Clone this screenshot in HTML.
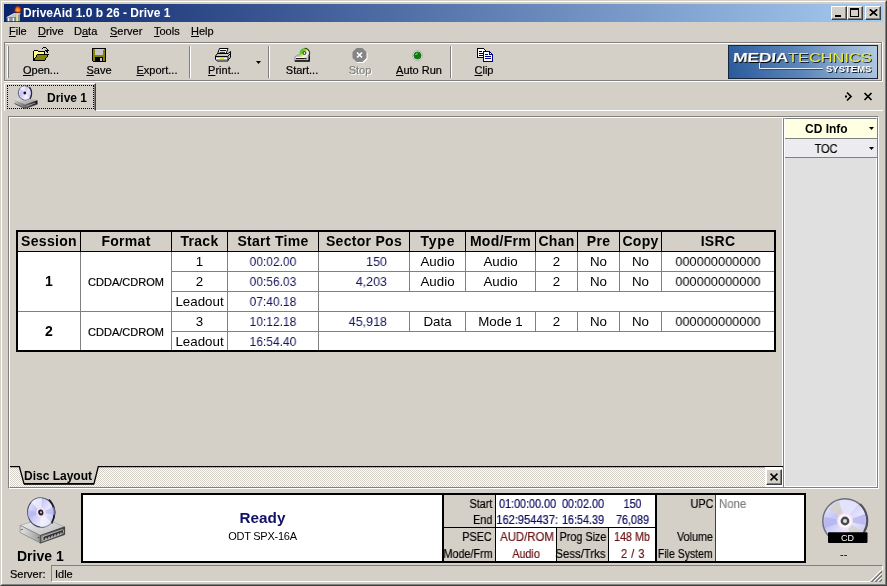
<!DOCTYPE html>
<html>
<head>
<meta charset="utf-8">
<title>DriveAid</title>
<style>
*{box-sizing:border-box;margin:0;padding:0}
html,body{width:887px;height:586px;overflow:hidden;background:#d4d0c8}
body{font-family:"Liberation Sans",sans-serif;font-size:11px;color:#000;position:relative}
.a{position:absolute}
.t{position:absolute;white-space:nowrap;line-height:1;will-change:transform}
.menu,.nr,.nl,.nc,.fm,.sbt{-webkit-text-stroke:.2px}
u{text-decoration:underline;text-underline-offset:1px}
#frame{left:0;top:0;width:887px;height:586px;border:1px solid;border-color:#d4d0c8 #404040 #404040 #d4d0c8}
#frame2{left:1px;top:1px;width:885px;height:584px;border:1px solid;border-color:#fff #808080 #808080 #fff}
#title{left:4px;top:4px;width:879px;height:18px;background:linear-gradient(90deg,#0a246a 0%,#a6caf0 100%)}
#title .t{left:18.5px;top:3px;color:#fff;font-weight:bold;font-size:12px}
.cap{position:absolute;top:6px;width:16px;height:14px;background:#d4d0c8;border:1px solid;border-color:#fff #404040 #404040 #fff;box-shadow:inset -1px -1px 0 #808080}
.menu{top:26px;font-size:11px}
.hl{position:absolute;height:1px}
.vl{position:absolute;width:1px}
.tb{position:absolute;font-size:11px;white-space:nowrap;line-height:1;text-align:center;transform:translateX(-50%);will-change:transform;-webkit-text-stroke:.2px}

.th{font-weight:bold;font-size:14px;text-align:center;letter-spacing:.3px}
.sb{font-weight:bold;font-size:14px;text-align:center}
.fm{font-size:11px;text-align:center}
.c13{font-size:13.33px;text-align:center}
.c12{font-size:13.33px;text-align:center;transform:scaleX(.96)}
.tm{font-size:13.33px;text-align:center;color:#14145c;transform:scaleX(.9)}
.sp{font-size:13.33px;text-align:right;color:#14145c;transform:scaleX(.94);transform-origin:right center}

.nr{font-size:12px;text-align:right;transform:scaleX(.9);transform-origin:right center}
.nl{font-size:12px;text-align:left;transform:scaleX(.9);transform-origin:left center}
.nc{font-size:12px;text-align:center;transform:scaleX(.9);transform-origin:center center}
.nv{color:#0c0c60}
.rd{color:#681010}
</style>
</head>
<body>

<svg width="0" height="0" style="position:absolute">
  <defs>
    <linearGradient id="gcd" x1="0" y1="0" x2="1" y2="1">
      <stop offset="0" stop-color="#f4f4ff"/><stop offset=".35" stop-color="#c4c4f6"/><stop offset=".6" stop-color="#e6e6fb"/><stop offset="1" stop-color="#b8b8f0"/>
    </linearGradient>
    <linearGradient id="gtop" x1="0" y1="0" x2="1" y2="1"><stop offset="0" stop-color="#f2f2f2"/><stop offset="1" stop-color="#b8b8b8"/></linearGradient>
    <linearGradient id="gfl" x1="0" y1="0" x2="1" y2="0"><stop offset="0" stop-color="#e4e4e4"/><stop offset="1" stop-color="#9a9a9a"/></linearGradient>
    <linearGradient id="gfr" x1="0" y1="0" x2="1" y2="0"><stop offset="0" stop-color="#8a8a8a"/><stop offset="1" stop-color="#3c3c3c"/></linearGradient>
    <linearGradient id="glogo" x1="0" y1="1" x2="1" y2="0"><stop offset="0" stop-color="#2a5a9c"/><stop offset=".45" stop-color="#5f88bb"/><stop offset="1" stop-color="#b4cbe2"/></linearGradient>
    <linearGradient id="gtop2" x1="0" y1="0" x2="1" y2="1"><stop offset="0" stop-color="#eeeeee"/><stop offset="1" stop-color="#8c8c8c"/></linearGradient>
    <linearGradient id="gfl2" x1="0" y1="0" x2="1" y2="0"><stop offset="0" stop-color="#c4c4c4"/><stop offset="1" stop-color="#6c6c6c"/></linearGradient>
    <linearGradient id="gfr2" x1="0" y1="0" x2="1" y2="0"><stop offset="0" stop-color="#707070"/><stop offset="1" stop-color="#0c0c0c"/></linearGradient>
    <linearGradient id="ggr" x1="0" y1="0" x2="1" y2="1"><stop offset="0" stop-color="#10b020"/><stop offset=".3" stop-color="#58d030"/><stop offset=".48" stop-color="#e4e84c"/><stop offset=".62" stop-color="#f4f4f4"/><stop offset="1" stop-color="#b4b8b4"/></linearGradient>
  </defs>
</svg>
<div class="a" id="frame"></div>
<div class="a" id="frame2"></div>

<!-- title bar -->
<div class="a" id="title"><div class="t">DriveAid 1.0 b 26 - Drive 1</div></div>
<svg class="a" style="left:4px;top:4px" width="18" height="18" viewBox="0 0 18 18">
  <path d="M2 13.6 L10.4 9 H13 L11.8 13.6 Z" fill="#c8c0c4"/>
  <path d="M2 13.6 L10.4 9 L11.2 9.6 L4 13.6 Z" fill="#e4dcdc"/>
  <rect x="2.8" y="13.6" width="9" height="3.6" fill="#7f969e"/>
  <rect x="4" y="13.8" width="1.2" height="3.4" fill="#f4f4fa"/>
  <rect x="8.8" y="13.8" width="1.2" height="3.4" fill="#f4f4fa"/>
  <rect x="11.8" y="9" width="4.2" height="8.2" fill="#9aa47c"/>
  <rect x="12.2" y="9.4" width="1.8" height="7.8" fill="#e4dcb0"/>
  <path d="M11 9.2 H16.8 L16 10.4 H11.8Z" fill="#d8c8c0"/>
  <path d="M10.4 7.6 Q9.6 4.4 13.2 1.2 Q13.6 2.8 15.6 2 Q18.6 5.6 16.4 8.6 Q13.4 9.6 10.4 7.6Z" fill="#a02810"/>
  <path d="M11.2 7.2 Q10.8 4.8 13.2 2.8 Q13.8 4 15.2 3.4 Q17.2 5.8 15.8 7.8 Q13.4 8.4 11.2 7.2Z" fill="#f07818"/>
  <path d="M12.4 7 Q12.4 5.4 13.6 4.6 Q14.8 5.6 14.6 7.2Z" fill="#ffb040"/>
</svg>
<div class="cap" style="left:831px"><div class="a" style="left:3px;top:8px;width:6px;height:2px;background:#000"></div></div>
<div class="cap" style="left:847px"><div class="a" style="left:2px;top:1px;width:9px;height:9px;border:1px solid #000;border-top-width:2px"></div></div>
<div class="cap" style="left:865px"><svg class="a" style="left:2.5px;top:2px" width="9" height="7" viewBox="0 0 9 7"><path d="M0.8 0.3 L8.2 6.7 M8.2 0.3 L0.8 6.7" stroke="#000" stroke-width="1.7" fill="none"/></svg></div>

<!-- menu -->
<div class="t menu" style="left:9px"><u>F</u>ile</div>
<div class="t menu" style="left:38px"><u>D</u>rive</div>
<div class="t menu" style="left:74px">D<u>a</u>ta</div>
<div class="t menu" style="left:110px"><u>S</u>erver</div>
<div class="t menu" style="left:154px"><u>T</u>ools</div>
<div class="t menu" style="left:191px"><u>H</u>elp</div>

<!-- toolbar -->
<div class="hl" style="left:4px;top:42px;width:879px;background:#808080"></div>
<div class="hl" style="left:5px;top:43px;width:876px;background:#fff"></div>
<div class="hl" style="left:4px;top:80px;width:878px;background:#808080"></div>
<div class="hl" style="left:4px;top:81px;width:879px;background:#fff"></div>
<div class="vl" style="left:4px;top:42px;height:39px;background:#808080"></div>
<div class="vl" style="left:881px;top:43px;height:38px;background:#808080"></div>
<div class="vl" style="left:882px;top:42px;height:40px;background:#fff"></div>
<div class="vl" style="left:7px;top:46px;height:32px;background:#fff"></div>
<div class="vl" style="left:8px;top:46px;height:32px;background:#808080"></div>

<div class="tb" style="left:41px;top:65px"><u>O</u>pen...</div>
<div class="tb" style="left:99px;top:65px"><u>S</u>ave</div>
<div class="tb" style="left:156.5px;top:65px"><u>E</u>xport...</div>
<div class="tb" style="left:223.5px;top:65px"><u>P</u>rint...</div>
<div class="tb" style="left:301.5px;top:65px">Start...</div>
<div class="tb" style="left:360px;top:65px;color:#808080;text-shadow:1px 1px 0 #fff">Stop</div>
<div class="tb" style="left:418.5px;top:65px"><u>A</u>uto Run</div>
<div class="tb" style="left:484px;top:65px"><u>C</u>lip</div>

<!-- toolbar separators -->
<div class="vl" style="left:189px;top:46px;height:32px;background:#808080"></div>
<div class="vl" style="left:190px;top:46px;height:32px;background:#fff"></div>
<div class="vl" style="left:268px;top:46px;height:32px;background:#808080"></div>
<div class="vl" style="left:269px;top:46px;height:32px;background:#fff"></div>
<div class="vl" style="left:450px;top:46px;height:32px;background:#808080"></div>
<div class="vl" style="left:451px;top:46px;height:32px;background:#fff"></div>
<svg class="a" style="left:256px;top:61px" width="5" height="3" viewBox="0 0 5 3"><path d="M0 0h5L2.5 3z" fill="#000"/></svg>

<!-- logo -->
<div class="a" id="logo" style="left:728px;top:45px;width:150px;height:34px;border:1px solid #18243a;background:linear-gradient(75deg,#2a5a9c 0%,#5f88bb 50%,#b4cbe2 100%)"></div>

<!-- tab row -->
<div class="hl" style="left:96px;top:110px;width:787px;background:#fff"></div>
<div class="a" id="tab1" style="left:4px;top:83px;width:92px;height:28px;border-top-left-radius:2px;border:1px solid;border-color:#fff #404040 #d4d0c8 #fff;box-shadow:inset -1px 0 0 #808080"></div>
<div class="a" style="left:7px;top:85px;width:87px;height:24px;border:1px dotted #000"></div>
<div class="t" style="left:47px;top:92px;font-weight:bold;font-size:12px">Drive 1</div>

<!-- main panel -->
<div class="a" id="panel" style="left:8px;top:116px;width:871px;height:373px;border:1px solid;border-color:#808080 #fff #fff #808080"></div>
<div class="a" style="left:9px;top:117px;width:869px;height:371px;border:1px solid;border-color:#fff #808080 #808080 #fff"></div>

<!-- sidebar -->
<div class="vl" style="left:782px;top:118px;height:369px;background:#fff"></div>
<div class="vl" style="left:783px;top:118px;height:369px;background:#808080"></div>
<div class="a" id="side" style="left:784px;top:118px;width:93px;height:369px;background:#e0e0e0;border:1px solid;border-color:#808080 #fff #fff #fff"></div>
<div class="a" style="left:785px;top:119px;width:92px;height:19px;background:#ffffe1"></div>
<div class="hl" style="left:785px;top:138px;width:92px;background:#808080"></div>
<div class="a" style="left:785px;top:139px;width:92px;height:18px;background:#ececf0"></div>
<div class="hl" style="left:785px;top:157px;width:92px;background:#808080"></div>
<div class="t" style="left:805px;top:123px;font-weight:bold;font-size:12px">CD Info</div>
<div class="t nc" style="left:806px;top:143px;width:40px">TOC</div>
<svg class="a" style="left:869px;top:127px" width="5" height="3" viewBox="0 0 5 3"><path d="M0 0h5L2.5 3z" fill="#000"/></svg>
<svg class="a" style="left:869px;top:147px" width="5" height="3" viewBox="0 0 5 3"><path d="M0 0h5L2.5 3z" fill="#000"/></svg>

<!-- TOC table -->
<div class="a" id="toc" style="left:16px;top:230px;width:760px;height:122px;border:2px solid #000;background:#fff"></div>
<div class="a" style="left:18px;top:232px;width:756px;height:19px;background:#d4d0c8"></div>
<div class="hl" style="left:18px;top:251px;width:756px;background:#000"></div>
<div class="t th" style="left:18px;top:234px;width:62px">Session</div>
<div class="t th" style="left:81px;top:234px;width:90px">Format</div>
<div class="vl" style="left:80px;top:232px;height:19px;background:#000"></div>
<div class="t th" style="left:172px;top:234px;width:55px">Track</div>
<div class="vl" style="left:171px;top:232px;height:19px;background:#000"></div>
<div class="t th" style="left:228px;top:234px;width:90px">Start Time</div>
<div class="vl" style="left:227px;top:232px;height:19px;background:#000"></div>
<div class="t th" style="left:319px;top:234px;width:90px">Sector Pos</div>
<div class="vl" style="left:318px;top:232px;height:19px;background:#000"></div>
<div class="t th" style="left:410px;top:234px;width:55px;letter-spacing:.8px;text-indent:.8px">Type</div>
<div class="vl" style="left:409px;top:232px;height:19px;background:#000"></div>
<div class="t th" style="left:466px;top:234px;width:69px">Mod/Frm</div>
<div class="vl" style="left:465px;top:232px;height:19px;background:#000"></div>
<div class="t th" style="left:536px;top:234px;width:41px">Chan</div>
<div class="vl" style="left:535px;top:232px;height:19px;background:#000"></div>
<div class="t th" style="left:578px;top:234px;width:41px">Pre</div>
<div class="vl" style="left:577px;top:232px;height:19px;background:#000"></div>
<div class="t th" style="left:620px;top:234px;width:41px">Copy</div>
<div class="vl" style="left:619px;top:232px;height:19px;background:#000"></div>
<div class="t th" style="left:662px;top:234px;width:112px">ISRC</div>
<div class="vl" style="left:661px;top:232px;height:19px;background:#000"></div>
<div class="vl" style="left:80px;top:252px;height:98px;background:#808080"></div>
<div class="vl" style="left:171px;top:252px;height:98px;background:#808080"></div>
<div class="vl" style="left:227px;top:252px;height:98px;background:#808080"></div>
<div class="vl" style="left:318px;top:252px;height:98px;background:#808080"></div>
<div class="vl" style="left:409px;top:252px;height:39px;background:#808080"></div>
<div class="vl" style="left:409px;top:312px;height:19px;background:#808080"></div>
<div class="vl" style="left:465px;top:252px;height:39px;background:#808080"></div>
<div class="vl" style="left:465px;top:312px;height:19px;background:#808080"></div>
<div class="vl" style="left:535px;top:252px;height:39px;background:#808080"></div>
<div class="vl" style="left:535px;top:312px;height:19px;background:#808080"></div>
<div class="vl" style="left:577px;top:252px;height:39px;background:#808080"></div>
<div class="vl" style="left:577px;top:312px;height:19px;background:#808080"></div>
<div class="vl" style="left:619px;top:252px;height:39px;background:#808080"></div>
<div class="vl" style="left:619px;top:312px;height:19px;background:#808080"></div>
<div class="vl" style="left:661px;top:252px;height:39px;background:#808080"></div>
<div class="vl" style="left:661px;top:312px;height:19px;background:#808080"></div>
<div class="hl" style="left:172px;top:271px;width:602px;background:#808080"></div>
<div class="hl" style="left:172px;top:291px;width:602px;background:#808080"></div>
<div class="hl" style="left:18px;top:311px;width:756px;background:#808080"></div>
<div class="hl" style="left:172px;top:331px;width:602px;background:#808080"></div>
<div class="t sb" style="left:18px;top:274px;width:62px">1</div>
<div class="t sb" style="left:18px;top:324px;width:62px">2</div>
<div class="t fm" style="left:81px;top:277px;width:90px">CDDA/CDROM</div>
<div class="t fm" style="left:81px;top:327px;width:90px">CDDA/CDROM</div>
<div class="t c13" style="left:172px;top:254.6px;width:55px">1</div>
<div class="t tm" style="left:228px;top:254.6px;width:90px">00:02.00</div>
<div class="t sp" style="left:319px;top:254.6px;width:68px">150</div>
<div class="t c13" style="left:410px;top:254.6px;width:55px">Audio</div>
<div class="t c13" style="left:466px;top:254.6px;width:69px">Audio</div>
<div class="t c13" style="left:536px;top:254.6px;width:41px">2</div>
<div class="t c13" style="left:578px;top:254.6px;width:41px">No</div>
<div class="t c13" style="left:620px;top:254.6px;width:41px">No</div>
<div class="t c12" style="left:662px;top:254.6px;width:112px">000000000000</div>
<div class="t c13" style="left:172px;top:274.6px;width:55px">2</div>
<div class="t tm" style="left:228px;top:274.6px;width:90px">00:56.03</div>
<div class="t sp" style="left:319px;top:274.6px;width:68px">4,203</div>
<div class="t c13" style="left:410px;top:274.6px;width:55px">Audio</div>
<div class="t c13" style="left:466px;top:274.6px;width:69px">Audio</div>
<div class="t c13" style="left:536px;top:274.6px;width:41px">2</div>
<div class="t c13" style="left:578px;top:274.6px;width:41px">No</div>
<div class="t c13" style="left:620px;top:274.6px;width:41px">No</div>
<div class="t c12" style="left:662px;top:274.6px;width:112px">000000000000</div>
<div class="t c13" style="left:172px;top:294.6px;width:55px">Leadout</div>
<div class="t tm" style="left:228px;top:294.6px;width:90px">07:40.18</div>
<div class="t c13" style="left:172px;top:314.6px;width:55px">3</div>
<div class="t tm" style="left:228px;top:314.6px;width:90px">10:12.18</div>
<div class="t sp" style="left:319px;top:314.6px;width:68px">45,918</div>
<div class="t c13" style="left:410px;top:314.6px;width:55px">Data</div>
<div class="t c13" style="left:466px;top:314.6px;width:69px">Mode 1</div>
<div class="t c13" style="left:536px;top:314.6px;width:41px">2</div>
<div class="t c13" style="left:578px;top:314.6px;width:41px">No</div>
<div class="t c13" style="left:620px;top:314.6px;width:41px">No</div>
<div class="t c12" style="left:662px;top:314.6px;width:112px">000000000000</div>
<div class="t c13" style="left:172px;top:334.6px;width:55px">Leadout</div>
<div class="t tm" style="left:228px;top:334.6px;width:90px">16:54.40</div>


<!-- bottom tab strip -->
<div class="a" style="left:10px;top:466px;width:772px;height:21px;background:repeating-conic-gradient(#fff 0 25%,#d4d0c8 0 50%) 0 0/2px 2px"></div>
<svg class="a" style="left:10px;top:466px" width="773" height="20" viewBox="0 0 773 20">
  <path d="M9 0 L14 18 L84 18 L88 0 Z" fill="#d4d0c8"/>
  <path d="M0 0.5 H9.3 L14 17.6 H84 L88.3 0.5 H773" fill="none" stroke="#000" stroke-width="1.3"/><path d="M14 18 H84" stroke="#000" stroke-width="1.6" fill="none"/>
</svg>
<div class="t" style="left:24px;top:470px;font-weight:bold;font-size:12px">Disc Layout</div>
<div class="a" style="left:765px;top:467px;width:17px;height:20px;background:#fff"></div>
<div class="a" style="left:766px;top:469px;width:16px;height:16px;background:#d4d0c8;border:1px solid;border-color:#fff #404040 #404040 #fff;box-shadow:inset -1px -1px 0 #808080"></div>
<svg class="a" style="left:770px;top:473px" width="8" height="8" viewBox="0 0 8 8"><path d="M0.5 0.7 L7.5 7.3 M7.5 0.7 L0.5 7.3" stroke="#000" stroke-width="1.6" fill="none"/></svg>

<!-- bottom status panel -->
<div class="a" style="left:81px;top:493px;width:725px;height:70px;border:2px solid #000;background:#fff"></div>
<div class="a" style="left:442px;top:495px;width:2px;height:66px;background:#000"></div>
<div class="a" style="left:444px;top:495px;width:51px;height:66px;background:#d4d0c8"></div>
<div class="vl" style="left:495px;top:495px;height:66px;background:#000"></div>
<div class="hl" style="left:444px;top:527px;width:211px;background:#000"></div>
<div class="a" style="left:557px;top:528px;width:51px;height:33px;background:#d4d0c8"></div>
<div class="vl" style="left:556px;top:528px;height:33px;background:#000"></div>
<div class="vl" style="left:608px;top:528px;height:33px;background:#000"></div>
<div class="a" style="left:655px;top:495px;width:2px;height:66px;background:#000"></div>
<div class="a" style="left:657px;top:495px;width:58px;height:66px;background:#d4d0c8"></div>
<div class="vl" style="left:715px;top:495px;height:66px;background:#404040"></div>

<div class="t" style="left:83px;top:510.5px;width:359px;text-align:center;font-weight:bold;font-size:14px;color:#101068;transform:scaleX(1.09)">Ready</div>
<div class="t" style="left:83px;top:530.7px;width:359px;text-align:center;font-size:11px;letter-spacing:-.25px">ODT SPX-16A</div>

<div class="t nr" style="right:395px;top:498px">Start</div>
<div class="t nr" style="right:395px;top:514px">End</div>
<div class="t nr" style="right:395px;top:531px">PSEC</div>
<div class="t nr" style="right:394.3px;top:548px;transform:scaleX(.9)">Mode/Frm</div>
<div class="t nc nv" style="left:496px;top:498px;width:61px">01:00:00.00</div>
<div class="t nc nv" style="left:493.7px;top:514px;width:61px;transform:scaleX(.925)">162:954437:</div>
<div class="t nc nv" style="left:557px;top:498px;width:52px">00:02.00</div>
<div class="t nc nv" style="left:557px;top:514px;width:52px">16:54.39</div>
<div class="t nc nv" style="left:609px;top:498px;width:47px">150</div>
<div class="t nc nv" style="left:609px;top:514px;width:47px">76,089</div>
<div class="t nc rd" style="left:496.5px;top:531px;width:60px;transform:scaleX(.95)">AUD/ROM</div>
<div class="t nc rd" style="left:496px;top:548px;width:60px">Audio</div>
<div class="t nc" style="left:557px;top:531px;width:51px">Prog Size</div>
<div class="t nc" style="left:554.3px;top:548px;width:51px;transform:scaleX(.945)">Sess/Trks</div>
<div class="t nc rd" style="left:609px;top:531px;width:46px">148 Mb</div>
<div class="t nc rd" style="left:610px;top:548px;width:46px;letter-spacing:.6px">2 / 3</div>
<div class="t nr" style="right:174px;top:498px">UPC</div>
<div class="t nr" style="right:174px;top:531px">Volume</div>
<div class="t nr" style="right:174.3px;top:548px;transform:scaleX(.875)">File System</div>
<div class="t nl" style="left:719px;top:498px;color:#808080;transform:scaleX(.95)">None</div>

<div class="t" style="left:17px;top:549px;font-weight:bold;font-size:14px">Drive 1</div>
<div class="t" style="left:840px;top:549px;font-size:11px">--</div>

<!-- status bar -->
<div class="t sbt" style="left:10px;top:569px;font-size:11px">Server:</div>
<div class="a" style="left:51px;top:565px;width:832px;height:17px;border:1px solid;border-color:#808080 #fff #fff #808080"></div>
<div class="t sbt" style="left:55px;top:569px;font-size:11px">Idle</div>
<div class="vl" style="left:882px;top:570px;height:12px;background:#d4d0c8"></div><div class="hl" style="left:870px;top:581px;width:13px;background:#d4d0c8"></div>
<svg class="a" style="left:870px;top:570px" width="12" height="12" viewBox="0 0 12 12">
  <path d="M11 0 L0 11 M11 4 L4 11 M11 8 L8 11" stroke="#fff" stroke-width="1" fill="none"/>
  <path d="M12 1 L1 12 M12 2 L2 12 M12 5 L5 12 M12 6 L6 12 M12 9 L9 12 M12 10 L10 12" stroke="#808080" stroke-width="1" fill="none"/>
</svg>

<!-- toolbar icons -->
<svg class="a" style="left:33px;top:47px" width="17" height="15" viewBox="0 0 17 15" shape-rendering="crispEdges">
  <path d="M0.5 13.5 V4.5 L1.5 3.5 H4.5 L5.5 4.5 H11.5 V7.5" fill="#ffff84" stroke="#000"/>
  <path d="M0.5 13.5 L4.5 7.5 H15.5 L11.5 13.5 Z" fill="#848400" stroke="#000"/>
  <path d="M9 1.5 H10 M10 0.5 H13 M13 1.5 H14 M14 2.5 H15 M12 3.5 H16 M13 4.5 H15 M14 5.5 H15" stroke="#000" fill="none"/>
</svg>
<svg class="a" style="left:92px;top:48px" width="14" height="14" viewBox="0 0 14 14" shape-rendering="crispEdges">
  <path d="M0.5 0.5 H13.5 V13.5 H1.5 L0.5 12.5 Z" fill="#848400" stroke="#000"/>
  <rect x="3" y="1" width="8" height="6" fill="#c6c6c6"/>
  <rect x="11" y="1" width="1" height="1" fill="#c6c6c6"/>
  <rect x="3" y="9" width="8" height="4" fill="#000"/>
  <rect x="8" y="10" width="2" height="3" fill="#c6c6c6"/>
</svg>
<svg class="a" style="left:214px;top:47px" width="18" height="16" viewBox="0 0 18 16">
  <path d="M5.5 1.5 H14 L12 7 H3.5 Z" fill="#fff" stroke="#000" stroke-width="1"/>
  <path d="M6 3.5 H12 M5.5 5.3 H11.2" stroke="#000" stroke-width=".9"/>
  <path d="M1.5 9 L3.5 6.5 H14 L16.5 4.5 V10.5 L14 13 V14 H3 L1.5 12.5 Z" fill="#c6c6c6" stroke="#000" stroke-width="1"/>
  <path d="M2 9.5 H13.5 L16 7" stroke="#000" stroke-width="1" fill="none"/>
  <path d="M2 11.5 H13.5" stroke="#fff" stroke-width="1"/>
  <path d="M6 11.5 H10" stroke="#e8e840" stroke-width="1"/>
  <path d="M2 13 H13.5" stroke="#848484" stroke-width="1"/>
  <path d="M14 9.5 V13" stroke="#000" stroke-width="1"/>
</svg>
<svg class="a" style="left:294px;top:47px" width="17" height="16" viewBox="0 0 17 16">
  <path d="M0.8 10 L4 7.8 H15 V13.6 H0.8 Z" fill="#c8c8c8" stroke="#8c8c8c" stroke-width=".8"/>
  <path d="M0.8 14 H15.2 V8.5" stroke="#000" stroke-width="1.3" fill="none"/>
  <path d="M2 10.6 H12.5" stroke="#fff" stroke-width="1"/>
  <path d="M2 11.6 H12.5" stroke="#000" stroke-width="1"/>
  <circle cx="10.6" cy="6.2" r="5" fill="url(#ggr)"/>
  <path d="M10.6 1.2 A5 5 0 0 1 14.6 9.2" stroke="#303830" stroke-width="1.1" fill="none"/>
  <circle cx="10.4" cy="6" r="1.5" fill="#e8e8e8" stroke="#181818" stroke-width=".9"/>
</svg>
<svg class="a" style="left:351px;top:47px" width="18" height="18" viewBox="0 0 18 18">
  <path d="M6.6 2 H12.4 L16.5 6.1 V11.9 L12.4 16 H6.6 L2.5 11.9 V6.1 Z" fill="#fff"/>
  <path d="M5.6 1 H11.4 L15.5 5.1 V10.9 L11.4 15 H5.6 L1.5 10.9 V5.1 Z" fill="#848484"/>
  <path d="M6 5.5 L11 10.5 M11 5.5 L6 10.5" stroke="#fff" stroke-width="1.6" fill="none"/>
</svg>
<svg class="a" style="left:411px;top:49px" width="13" height="13" viewBox="0 0 13 13">
  <circle cx="6.5" cy="6.5" r="5" fill="#e8ece8" stroke="#b0b4ac" stroke-width="1"/>
  <circle cx="6.5" cy="6.5" r="3.6" fill="#008400" stroke="#2a6a2a" stroke-width=".8"/>
  <path d="M4.6 6 Q5 4.6 6.6 4.6" stroke="#c0f0c0" stroke-width=".9" fill="none"/>
</svg>
<svg class="a" style="left:477px;top:48px" width="17" height="14" viewBox="0 0 17 14" shape-rendering="crispEdges">
  <path d="M0.5 0.5 H6.5 L8.5 2.5 V9.5 H0.5 Z" fill="#fff" stroke="#000"/>
  <path d="M2 3.5 H5 M2 5.5 H7 M2 7.5 H7" stroke="#000"/>
  <path d="M6.5 3.5 H12.5 L15.5 6.5 V13.5 H6.5 Z" fill="#fff" stroke="#000084"/>
  <path d="M12.5 3.5 V6.5 H15.5" fill="none" stroke="#000084"/>
  <path d="M8 6.5 H11 M8 8.5 H14 M8 10.5 H14" stroke="#000084"/>
</svg>

<!-- logo text -->
<div class="t" style="left:734px;top:52.5px;font-weight:bold;font-size:12.5px;color:#000;transform:scaleX(1.42) skewX(-4deg);transform-origin:left center;letter-spacing:-.3px">MEDIA</div>
<div class="t" style="left:733px;top:51.5px;font-weight:bold;font-size:12.5px;color:#fff;transform:scaleX(1.42) skewX(-4deg);transform-origin:left center;letter-spacing:-.3px">MEDIA</div>
<div class="t" style="left:789px;top:52.5px;font-size:12.5px;color:#1a2430;transform:scaleX(1.31);transform-origin:left center">TECHNICS</div>
<div class="t" style="left:788px;top:51.5px;font-size:12.5px;color:#ecec38;transform:scaleX(1.31);transform-origin:left center">TECHNICS</div>
<div class="t" style="left:827px;top:65px;font-weight:bold;font-size:9.5px;color:#1a2430">SYSTEMS</div>
<div class="t" style="left:826px;top:64px;font-weight:bold;font-size:9.5px;color:#fff">SYSTEMS</div>
<svg class="a" style="left:758px;top:62px" width="68" height="9" viewBox="0 0 68 9"><path d="M1.5 1 V6.5 H65" fill="none" stroke="#e4ecf4" stroke-width="1"/><path d="M2.5 2 V5.5 M2 7.5 H65" fill="none" stroke="#33507a" stroke-width="1"/></svg>

<!-- tab-row right glyphs -->
<svg class="a" style="left:844px;top:91px" width="10" height="11" viewBox="0 0 10 11"><path d="M3 1.5 L7 5.5 L3 9.5" stroke="#000" stroke-width="1.7" fill="none"/><rect x="1" y="4.5" width="2" height="2" fill="#000"/></svg>
<svg class="a" style="left:863px;top:92px" width="10" height="9" viewBox="0 0 10 9"><path d="M1.5 1 L8.5 8 M8.5 1 L1.5 8" stroke="#000" stroke-width="1.7" fill="none"/></svg>

<!-- drive icon in tab -->
<svg class="a" style="left:13px;top:85px" width="26" height="24" viewBox="0 0 52 48">
  <path d="M3 30 L26 24 L49 31 L24 40 Z" fill="url(#gtop2)"/>
  <path d="M3 30 L24 39 V47 L3 37 Z" fill="url(#gfl2)"/>
  <path d="M24 39 L49 30.5 V38 L24 47 Z" fill="url(#gfr2)"/>
  <path d="M27 41.5 L45 35 V36.6 L27 43.4 Z" fill="#a8a8a8"/>
  <path d="M3 37 L24 47 L49 38" stroke="#383838" stroke-width="1.6" fill="none"/>
  <ellipse cx="24" cy="16" rx="13.4" ry="14.2" fill="url(#gcd)" stroke="#5c5c78" stroke-width="1.8" transform="rotate(-12 24 16)"/>
  <path d="M33 4.5 Q41 14 34 28" stroke="#262634" stroke-width="2.6" fill="none"/>
  <path d="M24 16 L14 6 A14 14 0 0 1 25 2 Z" fill="#fff" opacity=".6"/>
  <path d="M24 16 L34 26 A14 14 0 0 1 22 30 Z" fill="#fff" opacity=".5"/>
  <circle cx="24" cy="16" r="4.4" fill="#f0dcf0"/>
  <circle cx="23.6" cy="16" r="2.8" fill="#141424"/>
</svg>

<!-- large drive icon -->
<svg class="a" style="left:18px;top:496px" width="48" height="48" viewBox="0 0 48 48">
  <path d="M2.2 29.4 L26 22 L46.6 30.9 L22.3 39.5 Z" fill="url(#gtop)" stroke="#9a9a9a" stroke-width=".6"/>
  <path d="M2.2 29.4 L22.3 39.5 V47.1 L2.2 36.5 Z" fill="url(#gfl)" stroke="#707070" stroke-width=".6"/>
  <path d="M22.3 39.5 L46.6 30.9 V38.5 L22.3 47.1 Z" fill="url(#gfr)" stroke="#303030" stroke-width=".8"/>
  <path d="M25 40.6 L44.6 33.6 Q45.4 33.4 45.4 34.4 V36.6 Q45.4 37.4 44.6 37.7 L26 44.4 Q25 44.7 25 43.7 Z" fill="#2c2c2c" stroke="#d8d8d8" stroke-width=".8"/>
  <path d="M27 42.6 L43.6 36.6 M27 43.6 L43.6 37.4" stroke="#b4b4b4" stroke-width=".9" stroke-dasharray="2.2 1"/>
  <circle cx="4" cy="33.5" r=".7" fill="#303030"/><circle cx="20.4" cy="41.6" r=".7" fill="#303030"/>
  <ellipse cx="23.2" cy="16.5" rx="13.6" ry="14.8" fill="url(#gcd)" stroke="#40405a" stroke-width="1" transform="rotate(-12 23.2 16.5)"/>
  <path d="M31 3.6 Q40.5 14 33.5 27.6" stroke="#20202c" stroke-width="1.8" fill="none"/>
  <path d="M23.2 16.5 L13 6 A14 14 0 0 1 24 1.8 Z" fill="#fff" opacity=".55"/>
  <path d="M23.2 16.5 L34 27 A14 14 0 0 1 22 31 Z" fill="#fff" opacity=".5"/>
  <path d="M23.2 16.5 L9.8 14 A14 14 0 0 0 10.4 22 Z" fill="#b0b0ee" opacity=".6"/>
  <path d="M23.2 16.5 L36.6 19 A14 14 0 0 0 36 11 Z" fill="#b0b0ee" opacity=".6"/>
  <ellipse cx="23" cy="16.5" rx="4.6" ry="5" fill="#f4e2f4" transform="rotate(-12 23 16.5)"/>
  <ellipse cx="22.8" cy="16.5" rx="2.6" ry="3" fill="#20202c" transform="rotate(-12 22.8 16.5)"/>
  <ellipse cx="23" cy="16.4" rx="1" ry="1.2" fill="#c8c8d0" transform="rotate(-12 23 16.4)"/>
</svg>

<!-- CD icon -->
<svg class="a" style="left:820px;top:496px" width="50" height="47" viewBox="0 0 50 47">
  <circle cx="25" cy="25" r="22.2" fill="url(#gcd)" stroke="#70707c" stroke-width="1.5"/>
  <path d="M25 25 L9 13 A21 21 0 0 1 19 5 Z" fill="#d6d2ce" opacity=".95"/>
  <path d="M25 25 L42 35 A21 21 0 0 1 33 44 Z" fill="#d6d2ce" opacity=".95"/>
  <path d="M25 25 L4.5 21 A21 21 0 0 0 5 32 Z" fill="#b4b4f0" opacity=".8"/>
  <path d="M25 25 L45.5 29 A21 21 0 0 0 45 18 Z" fill="#b4b4f0" opacity=".8"/>
  <path d="M25 25 L19 5 A21 21 0 0 1 38 8.5 Z" fill="#e8e8fc" opacity=".8"/>
  <path d="M40 8 A22.2 22.2 0 0 1 44 36" stroke="#50505c" stroke-width="2" fill="none"/>
  <circle cx="25" cy="25" r="8" fill="#f6e4f6"/>
  <circle cx="25" cy="25" r="6.6" fill="#fff" opacity=".7"/>
  <circle cx="25" cy="25" r="4.4" fill="#484850"/>
  <circle cx="25" cy="25" r="2" fill="#d8e0d8"/>
  <rect x="8" y="36.3" width="39.5" height="10.7" rx="1" fill="#000"/>
</svg>
<div class="t" style="left:828px;top:534px;width:39px;text-align:center;font-size:9px;color:#fff">CD</div>

</body>
</html>
